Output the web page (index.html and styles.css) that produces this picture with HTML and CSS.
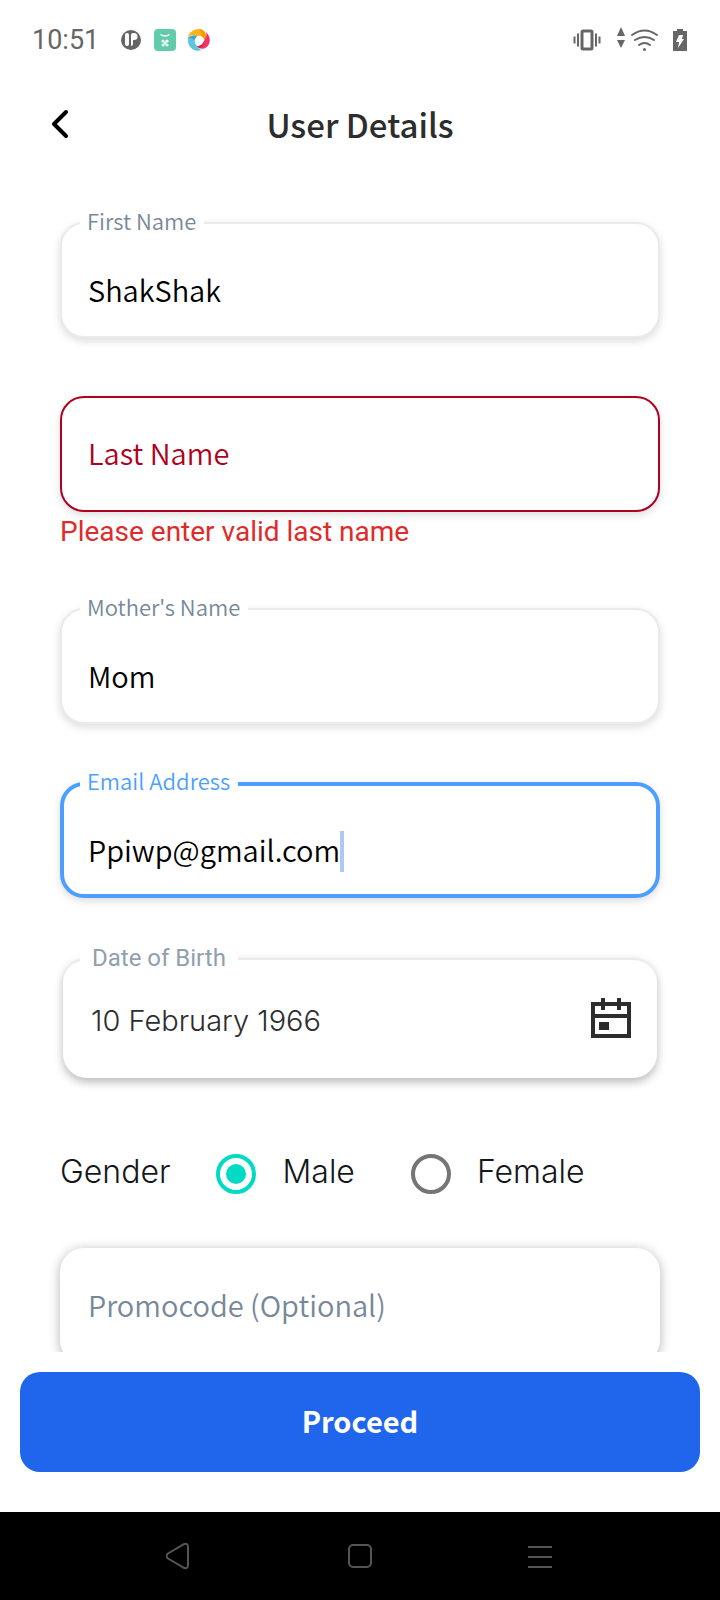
FILE: index.html
```html
<!DOCTYPE html>
<html lang="en">
<head>
<meta charset="utf-8">
<meta name="viewport" content="width=device-width, initial-scale=1">
<title>User Details</title>
<link rel="stylesheet" href="styles.css">
</head>
<body>
<div class="app">
  <div class="status">
    <span class="clock">10:51</span>
    <svg class="status-app" width="22" height="22" viewBox="0 0 22 22"><circle cx="11" cy="11" r="10" fill="#666"/><rect x="5" y="4" width="4" height="13" rx="2" fill="#fff"/><path d="M11 17V6q0-2 2-2h1a3.500 3.500 0 0 1 0 7h-1v4q0 2-2 2z" fill="#fff"/></svg>
    <svg class="status-app" width="22" height="22" viewBox="0 0 22 22"><rect width="22" height="22" rx="4" fill="#62cbaa"/><path d="M6.500 5.500q4.500 3 9 0" fill="none" stroke="#fff" stroke-width="1.500"/><g fill="#dff5ee"><circle cx="9" cy="12" r="1.600"/><circle cx="13" cy="12" r="1.600" fill="#fff"/><circle cx="9" cy="16" r="1.600"/><circle cx="13" cy="16" r="1.600"/><circle cx="11" cy="14" r="1.500" fill="#fff"/></g></svg>
    <svg class="status-app" width="22" height="22" viewBox="0 0 22 22"><path d="M0 8C1 3 6 0 11 0c4 0 7 3 7 8l-1 4c-1-4-4-6-8-5C6 5 3 6 0 8z" fill="#fdb515"/><path d="M11 0c4 0 7 3 7 8l-1 4c-1-3-2-4-4-5 1-3 0-5-2-7z" fill="#ff9800"/><path d="M18 3c3 3 5 7 3 12-2 4-6 6-10 4l-2-2c4 0 6-2 7-5 2-3 3-5 2-9z" fill="#ef3468"/><path d="M9 17c4 0 6-2 7-5 0 4-2 7-5 7z" fill="#d51c55"/><path d="M0 9c2-2 5-3 9-2-3 3-3 7 0 10 2 3 4 4 5 4C5 24-1 17 0 9z" fill="#5fc4dc"/><path d="M0 9c2-2 5-3 9-2l-3 4c-2-2-4-2-6-2z" fill="#39a7c8"/></svg>
    <span class="spacer"></span>
    <svg width="28" height="22" viewBox="0 0 28 22" fill="none" stroke="#666"><rect x="9" y="2" width="10" height="18" rx="1" stroke-width="3"/><path d="M5 4.500v13M23 4.500v13M1.500 7.500v7M26.500 7.500v7" stroke-width="2"/></svg>
    <svg class="status-net" width="44" height="26" viewBox="0 0 44 26"><path d="M6 0l4 9H2zM6 21l4-8H2z" fill="#666"/><g fill="none" stroke="#666" stroke-width="2" stroke-linecap="round"><path d="M17 8q12.500-9 25 0M20 13q9.500-6 19 0M24 18q5.500-4 11 0"/></g><circle cx="29.500" cy="22.500" r="1.500" fill="#666"/></svg>
    <svg width="14" height="22" viewBox="0 0 14 22"><path d="M4 0h6v2h4v20H0V2h4z" fill="#666"/><path d="M6 6h4l-1 4h2l-6 9 1-6H3z" fill="#fff"/></svg>
  </div>
  <header class="header">
    <button class="back" type="button" aria-label="Back"><svg width="20" height="30" viewBox="0 0 20 30"><path d="M16 3L4 15l12 12" fill="none" stroke="#000" stroke-width="4" stroke-linecap="round" stroke-linejoin="round"/></svg></button>
    <h1 class="title">User Details</h1>
  </header>
  <form class="form" id="details">
    <div class="field">
      <label class="label" for="first">First Name</label>
      <input class="input" id="first" type="text" value="ShakShak">
    </div>
    <div class="field">
      <input class="input input-error" id="last" type="text" placeholder="Last Name" aria-label="Last Name" aria-describedby="last-error">
      <p class="error" id="last-error">Please enter valid last name</p>
    </div>
    <div class="field">
      <label class="label" for="mother">Mother's Name</label>
      <input class="input" id="mother" type="text" value="Mom">
    </div>
    <div class="field">
      <label class="label label-active" for="email">Email Address</label>
      <input class="input input-active" id="email" type="text" value="Ppiwp@gmail.com">
      <span class="caret"></span>
    </div>
    <div class="field field-date">
      <label class="label label-date" for="dob">Date of Birth</label>
      <div class="date">
        <input class="date-input" id="dob" type="text" value="10 February 1966">
        <button class="date-button" type="button" aria-label="Pick a date"><svg width="40" height="40" viewBox="0 0 40 40"><path d="M2 6h36v32H2zM2 18h36M12 0v12M28 0v12" fill="none" stroke="#2d2d2d" stroke-width="4"/><path d="M8 24h10v8H8z" fill="#2d2d2d"/></svg></button>
      </div>
    </div>
    <div class="gender" role="radiogroup" aria-labelledby="gender-label">
      <span class="gender-label" id="gender-label">Gender</span>
      <input class="radio" type="radio" name="gender" id="male" checked><label class="option" for="male">Male</label>
      <input class="radio" type="radio" name="gender" id="female"><label class="option" for="female">Female</label>
    </div>
    <input class="input input-promo" type="text" placeholder="Promocode (Optional)" aria-label="Promocode (Optional)">
  </form>
  <footer class="footer"><button class="proceed" type="submit" form="details">Proceed</button></footer>
  <nav class="nav">
    <button class="nav-button" type="button" aria-label="Back"><svg width="28" height="28" viewBox="0 0 28 28"><path d="M17.500 2.300L2 11.500q-3 2.500 0 5L17.500 25.700Q22 27.500 22 23V5Q22 .5 17.500 2.300z"/></svg></button>
    <button class="nav-button" type="button" aria-label="Home"><svg width="28" height="28" viewBox="0 0 28 28"><rect x="3" y="3" width="22" height="22" rx="4"/></svg></button>
    <button class="nav-button" type="button" aria-label="Recent apps"><svg width="28" height="28" viewBox="0 0 28 28"><path d="M2 5h24M2 15h24M2 25h24"/></svg></button>
  </nav>
</div>
</body>
</html>
```
FILE: styles.css
```css
* { box-sizing: border-box; }
body { margin: 0; background: #fff; font-family: "Noto Sans CJK SC", "Noto Sans", sans-serif; font-weight: 350; }
button { margin: 0; padding: 0; border: 0; background: none; font: inherit; }
svg { display: block; }
.app { display: flex; flex-direction: column; height: 100vh; }

.status { display: flex; align-items: center; height: 80px; padding: 0 33px 0 32px; color: #666; }
.clock { margin-right: 9px; font: 27px/32px Roboto, sans-serif; }
.status-app { margin-left: 12px; }
.spacer { flex: 1; }
.status-net { margin: 0 14px; }

.header { display: grid; grid-template-columns: 40px 1fr 40px; align-items: center; height: 84px; padding: 4px 40px 0; }
.back { display: flex; justify-content: center; padding: 8px 0; }
.title { grid-column: 2; margin: 0; text-align: center; font-size: 33px; line-height: 48px; font-weight: 500; color: #2d2d2d; }

.form { flex: 1; min-height: 0; overflow: hidden; padding: 58px 60px 0; }
.field { position: relative; margin-bottom: 58px; }
.label { position: absolute; left: 20px; top: -18px; padding: 0 8px 0 7px; background: #fff; font-size: 22px; line-height: 32px; color: #778899; }
.label-active { color: #4d9fff; }
.input { display: block; width: 100%; height: 116px; padding: 18px 26px 0; border: 2px solid #e8ecec; border-radius: 24px; outline: 0; background: #fff; font: inherit; font-size: 29px; color: #000; box-shadow: 0 3px 8px rgba(0, 0, 0, .14); }
.input::placeholder { color: #778899; opacity: 1; }
.input-error { padding: 0 26px 4px; border-color: #b00020; }
.input-error::placeholder { color: #b00020; }
.input-active { padding: 18px 24px 0; border: 4px solid #4d9fff; }
.error { margin: 0; padding-top: 2px; font: 28px/36px Roboto, sans-serif; color: #e02b2b; }
.caret { position: absolute; left: 280px; top: 49px; width: 4px; height: 41px; background: #afc7f3; }

.field-date { margin: 60px 0 76px; }
.label-date { top: -16px; padding: 0 12px; font-family: Roboto, sans-serif; font-weight: 400; font-size: 24px; color: #90a0ac; }
.date { display: flex; align-items: center; height: 120px; margin: 0 3px; padding: 0 26px 2px 28px; border-top: 2px solid #e8ecec; border-radius: 24px; box-shadow: 0 4px 10px rgba(0, 0, 0, .28); background: #fff; }
.date-input { flex: 1; min-width: 0; height: 60px; padding: 4px 0 0; border: 0; outline: 0; background: none; font: 300 29px Inter, sans-serif; color: #2d2d2d; }

.gender { display: flex; align-items: center; height: 40px; margin-bottom: 54px; font: 300 32px/36px Inter, sans-serif; color: #14171a; }
.gender-label { margin-right: 46px; padding-bottom: 4px; }
.option { margin: 0 56px 0 26px; padding-bottom: 4px; }
.radio { appearance: none; display: grid; place-content: center; width: 40px; height: 40px; margin: 0; border: 4px solid #757575; border-radius: 50%; }
.radio:checked { border-color: #03dac5; }
.radio:checked::before { content: ""; width: 20px; height: 20px; border-radius: 50%; background: #03dac5; }
.input-promo { padding: 0 26px 4px; border-color: #fff; box-shadow: 0 2px 12px rgba(0, 0, 0, .3); }

.footer { padding: 20px 20px 40px; background: #fff; }
.proceed { display: block; width: 100%; height: 100px; padding-bottom: 4px; border-radius: 20px; background: #1f66ed; color: #fff; font-size: 29px; font-weight: 700; }
.nav { display: flex; justify-content: space-around; align-items: center; height: 88px; padding: 0 12.5%; background: #000; }
.nav svg { fill: none; stroke: #555; stroke-width: 2; }
```
